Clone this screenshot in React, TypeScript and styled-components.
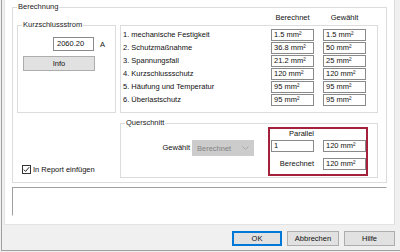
import React from "react";
import styled, { createGlobalStyle } from "styled-components";

const Global = createGlobalStyle`
  html, body { margin: 0; padding: 0; background: #f0f0f0; }
  body {
    font-family: "Liberation Sans", Arial, sans-serif;
    font-size: 7.5px;
    color: #111;
  }
  *, *::before, *::after { box-sizing: border-box; }
`;

const Window = styled.div`
  width: 400px;
  height: 252px;
  padding-left: 1px;
  background: #f0f0f0;
  overflow: hidden;
`;

const Frame = styled.div`
  height: 251px;
  display: flex;
  flex-direction: column;
  border-left: 1px solid #a0a0a0;
  border-bottom: 1px solid #a0a0a0;
  padding-left: 2px;
`;

const Main = styled.div`
  width: 391px;
  height: 225px;
  flex: none;
  background: #fff;
  border-left: 1px solid #e3e3e3;
  border-right: 1px solid #dcdcdc;
  border-bottom: 1px solid #e3e3e3;
  padding: 2px 7px 0 7px;
  display: flex;
  flex-direction: column;
`;

const Group = styled.fieldset<{ $w?: number; $h: number; $pad: string }>`
  margin: 0;
  min-width: 0;
  width: ${(p) => (p.$w ? `${p.$w}px` : "100%")};
  height: ${(p) => p.$h}px;
  flex: none;
  border: 1px solid #dcdcdc;
  padding: ${(p) => p.$pad};
`;

const Legend = styled.legend<{ $offset: number; $lh?: number }>`
  padding: 0 1px;
  margin-left: ${(p) => p.$offset}px;
  line-height: ${(p) => p.$lh ?? 10}px;
  font-size: 7.5px;
  color: #1a1a1a;
`;

const TopRow = styled.div`
  display: flex;
  align-items: flex-start;
  gap: 4px;
`;

const KurzInner = styled.div`
  display: flex;
  flex-direction: column;
`;

const InputRow = styled.div`
  display: flex;
  align-items: center;
  margin-top: 7px;
  margin-left: 30px;
  gap: 6px;
`;

const TextBox = styled.div<{ $w: number; $h: number }>`
  width: ${(p) => p.$w}px;
  height: ${(p) => p.$h}px;
  border: 1px solid #8a8a8a;
  background: #fff;
  padding-left: 2px;
  line-height: ${(p) => p.$h - 2}px;
  white-space: nowrap;
  overflow: hidden;
  color: #111;
`;

const Button = styled.div<{ $w: number; $default?: boolean }>`
  width: ${(p) => p.$w}px;
  height: 15px;
  flex: none;
  background: #e1e1e1;
  border: ${(p) => (p.$default ? "2px solid #0078d7" : "1px solid #adadad")};
  display: flex;
  align-items: center;
  justify-content: center;
  color: #111;
`;

const InfoButton = styled(Button)`
  margin-top: 5px;
`;

const RightCol = styled.div`
  width: 258px;
  flex: none;
  display: flex;
  flex-direction: column;
`;

const HeaderGrid = styled.div`
  display: grid;
  grid-template-columns: 1fr 43px 43px;
  column-gap: 9px;
  padding: 0 12px 0 3px;
  height: 10px;
  line-height: 10px;
  margin-bottom: 2px;
`;

const HeaderCell = styled.div`
  text-align: center;
  white-space: nowrap;
`;

const ListPanel = styled.div`
  height: 88px;
  border: 1px solid #dcdcdc;
  padding: 3px 11px 0 2px;
  display: grid;
  grid-template-columns: 1fr 43px 43px;
  grid-auto-rows: 12px;
  column-gap: 9px;
  row-gap: 1px;
  align-content: start;
`;

const RowLabel = styled.div`
  line-height: 12px;
  white-space: nowrap;
`;

const BottomRow = styled.div`
  display: flex;
  align-items: flex-end;
  gap: 4px;
  margin-top: 6px;
`;

const CheckCol = styled.div`
  width: 99px;
  flex: none;
  padding-left: 5px;
  margin-bottom: 4px;
  display: flex;
  align-items: center;
  gap: 2px;
  height: 10px;
  white-space: nowrap;
`;

const CheckBox = styled.span`
  width: 9px;
  height: 9px;
  border: 1px solid #333;
  background: #fff;
  display: inline-flex;
  align-items: center;
  justify-content: center;
  flex: none;
`;

const QuerInner = styled.div`
  display: flex;
  align-items: flex-start;
  height: 100%;
`;

const SelectArea = styled.div`
  flex: 1;
  display: flex;
  align-items: center;
  justify-content: flex-end;
  gap: 2px;
  padding-top: 13px;
  padding-right: 14px;
`;

const SelectLabel = styled.span`
  line-height: 16px;
`;

const Select = styled.div`
  width: 62px;
  height: 16px;
  background: #cccccc;
  border: 1px solid #cccccc;
  color: #838383;
  padding: 0 0 0 4px;
  display: flex;
  align-items: center;
  justify-content: space-between;
`;

const Chevron = styled.svg`
  margin-right: 4px;
`;

const RedBox = styled.div`
  width: 100px;
  height: 49px;
  flex: none;
  border: 2px solid #a3213a;
  padding: 0 0 0 1px;
  display: grid;
  grid-template-columns: 43px 43px;
  grid-template-rows: 11px 12px 18px;
  column-gap: 9px;
`;

const RedLabel = styled.div<{ $end?: boolean }>`
  text-align: right;
  white-space: nowrap;
  line-height: ${(p) => (p.$end ? 12 : 9)}px;
  align-self: ${(p) => (p.$end ? "end" : "start")};
`;

const EndBox = styled(TextBox)`
  align-self: end;
`;

const Memo = styled.div`
  margin-top: 4px;
  height: 29px;
  border-style: solid;
  border-width: 1px;
  border-color: #a0a0a0 #ffffff #ffffff #a0a0a0;
  background: #fff;
`;

const Footer = styled.div`
  flex: 1;
  display: flex;
  justify-content: flex-end;
  align-items: flex-start;
  gap: 5px;
  padding: 6px 5px 0 0;
`;

const rows: [string, string, string][] = [
  ["1. mechanische Festigkeit", "1.5 mm²", "1.5 mm²"],
  ["2. Schutzmaßnahme", "36.8 mm²", "50 mm²"],
  ["3. Spannungsfall", "21.2 mm²", "25 mm²"],
  ["4. Kurzschlussschutz", "120 mm²", "120 mm²"],
  ["5. Häufung und Temperatur", "95 mm²", "95 mm²"],
  ["6. Überlastschutz", "95 mm²", "95 mm²"],
];

export default function App() {
  return (
    <>
      <Global />
      <Window>
        <Frame>
          <Main>
            <Group $h={181} $pad="1px 8px 0 4px">
              <Legend $offset={0}>Berechnung</Legend>
              <TopRow>
                <Group $w={99} $h={93} $pad="0 0 0 5px" style={{ marginTop: 7 }}>
                  <Legend $offset={-1}>Kurzschlussstrom</Legend>
                  <KurzInner>
                    <InputRow>
                      <TextBox $w={41} $h={14} style={{ paddingLeft: 3 }}>
                        2060.20
                      </TextBox>
                      <span>A</span>
                    </InputRow>
                    <InfoButton $w={72}>Info</InfoButton>
                  </KurzInner>
                </Group>
                <RightCol>
                  <HeaderGrid>
                    <span />
                    <HeaderCell>Berechnet</HeaderCell>
                    <HeaderCell>Gewählt</HeaderCell>
                  </HeaderGrid>
                  <ListPanel>
                    {rows.map(([label, calc, chosen]) => (
                      <React.Fragment key={label}>
                        <RowLabel>{label}</RowLabel>
                        <TextBox $w={43} $h={12}>
                          {calc}
                        </TextBox>
                        <TextBox $w={43} $h={12}>
                          {chosen}
                        </TextBox>
                      </React.Fragment>
                    ))}
                  </ListPanel>
                </RightCol>
              </TopRow>
              <BottomRow>
                <CheckCol>
                  <CheckBox>
                    <svg width="7" height="7" viewBox="0 0 7 7">
                      <polyline
                        points="0.8,3.6 2.6,5.4 6.2,1.2"
                        fill="none"
                        stroke="#222"
                        strokeWidth="1"
                      />
                    </svg>
                  </CheckBox>
                  <span>In Report einfügen</span>
                </CheckCol>
                <Group $w={258} $h={59} $pad="0 9px 0 0">
                  <Legend $offset={4} $lh={8}>
                    Querschnitt
                  </Legend>
                  <QuerInner>
                    <SelectArea>
                      <SelectLabel>Gewählt</SelectLabel>
                      <Select>
                        <span>Berechnet</span>
                        <Chevron width="7" height="4" viewBox="0 0 7 4">
                          <polyline
                            points="0.5,0.5 3.5,3.5 6.5,0.5"
                            fill="none"
                            stroke="#a8a8a8"
                            strokeWidth="1"
                          />
                        </Chevron>
                      </Select>
                    </SelectArea>
                    <RedBox>
                      <RedLabel>Parallel</RedLabel>
                      <span />
                      <TextBox $w={43} $h={12}>
                        1
                      </TextBox>
                      <TextBox $w={43} $h={12}>
                        120 mm²
                      </TextBox>
                      <RedLabel $end>Berechnet</RedLabel>
                      <EndBox $w={43} $h={12}>
                        120 mm²
                      </EndBox>
                    </RedBox>
                  </QuerInner>
                </Group>
              </BottomRow>
            </Group>
            <Memo />
          </Main>
          <Footer>
            <Button $w={50} $default>
              OK
            </Button>
            <Button $w={52}>Abbrechen</Button>
            <Button $w={51}>Hilfe</Button>
          </Footer>
        </Frame>
      </Window>
    </>
  );
}
